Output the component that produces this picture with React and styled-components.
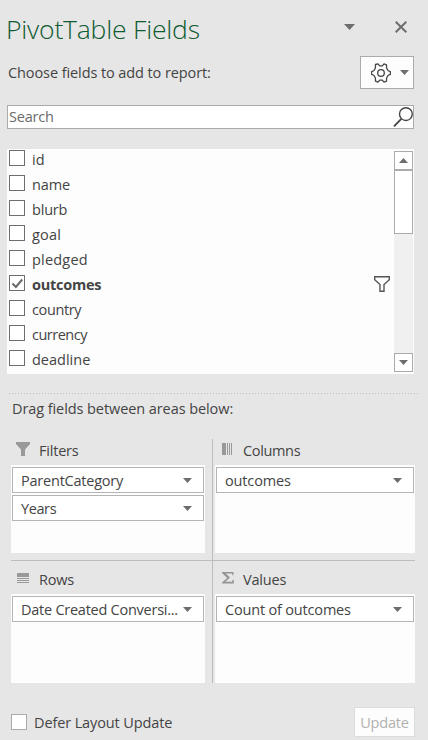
import React from "react";
import styled, { createGlobalStyle } from "styled-components";

const GlobalStyle = createGlobalStyle`
  * { box-sizing: border-box; }
  body { margin: 0; background: #e6e6e6; }
`;

const Pane = styled.main`
  width: 428px;
  height: 740px;
  background: #e6e6e6;
  color: #444;
  font: 14.5px/20px "Open Sans", "Noto Sans", sans-serif;
  overflow: hidden;
  display: flex;
  flex-direction: column;
`;

const Label = styled.span`
  white-space: nowrap;
  letter-spacing: ${(p) => p.$track || 0}px;
  font-weight: ${(p) => (p.$bold ? 700 : 400)};
`;

const TitleBar = styled.header`
  height: 56px;
  padding: 9px 21px 0 6px;
  display: flex;
  align-items: flex-start;
`;

const Title = styled.h1`
  margin: 0;
  flex: 1;
  color: #0f5a30;
  font-size: 26.5px;
  line-height: 40px;
  font-weight: 300;
  letter-spacing: ${(p) => p.$track}px;
  white-space: nowrap;
`;

const TitleIcons = styled.div`
  display: flex;
  align-items: center;
  gap: 40px;
  height: 36px;
`;

const Intro = styled.div`
  height: 33px;
  padding: 0 14px 0 8px;
  display: flex;
  justify-content: space-between;
  align-items: center;
`;

const ToolsButton = styled.button`
  width: 54px;
  height: 33px;
  padding: 0 4px 0 10px;
  border: 1px solid #ababab;
  background: #fdfdfd;
  display: flex;
  align-items: center;
  justify-content: space-between;
`;

const SearchBox = styled.div`
  margin: 16px 14px 20px 7px;
  height: 24px;
  padding-left: 1px;
  border: 1px solid #ababab;
  background: #fff;
  color: #6a6a6a;
  display: flex;
  justify-content: space-between;
  align-items: center;
`;

const FieldPanel = styled.section`
  margin: 0 14px 0 7px;
  height: 225px;
  background: #fdfdfd;
  display: flex;
  padding-right: 1px;
`;

const FieldList = styled.ul`
  flex: 1;
  margin: 0;
  padding: 0;
  list-style: none;
`;

const FieldRow = styled.li`
  height: 25px;
  padding: 1px 4px 0 2px;
  display: flex;
  align-items: flex-start;
`;

const FieldName = styled.div`
  flex: 1;
  padding-left: 7px;
  line-height: 20px;
`;

const FilterSlot = styled.div`
  padding-top: 1px;
  display: flex;
`;

const CheckBox = styled.span`
  width: 16px;
  height: 16px;
  border: 1px solid ${(p) => (p.$light ? "#ababab" : "#6e6e6e")};
  background: #fff;
  display: flex;
  flex: none;
`;

const ScrollBar = styled.div`
  width: 19px;
  margin: 2px 0;
  background: #f0f0f0;
  display: flex;
  flex-direction: column;
`;

const ScrollButton = styled.div`
  height: 19px;
  border: 1px solid #ababab;
  background: #fff;
  display: flex;
  align-items: center;
  justify-content: center;
`;

const Thumb = styled.div`
  height: 64px;
  border: 1px solid #ababab;
  background: #fff;
  margin-bottom: auto;
`;

const Divider = styled.div`
  margin: 19px 10px 0 9px;
  height: 1px;
  flex: none;
  background: repeating-linear-gradient(90deg, #bdbdbd 0 1px, transparent 1px 3px);
`;

const DragHint = styled.p`
  margin: 5px 0 20px 12px;
  height: 20px;
`;

const Areas = styled.section`
  margin: 0 13px 0 11px;
  display: grid;
  grid-template-columns: 201px 1fr;
  grid-template-rows: 121px 123px;
`;

const Area = styled.div`
  padding: ${(p) => (p.$lower ? "0" : "0 0 7px")};
  padding-right: ${(p) => (p.$right ? 0 : 7)}px;
  padding-left: ${(p) => (p.$right ? 2 : 0)}px;
  border-left: ${(p) => (p.$right ? "1px solid #bdbdbd" : "none")};
  border-top: ${(p) => (p.$lower ? "1px solid #bdbdbd" : "none")};
  display: flex;
  flex-direction: column;
`;

const AreaHeader = styled.div`
  height: ${(p) => (p.$lower ? 33 : 26)}px;
  padding: ${(p) => (p.$lower ? 9 : 2)}px 0 0 ${(p) => (p.$right ? 7 : 5)}px;
  display: flex;
  align-items: flex-start;
`;

const IconSlot = styled.span`
  width: ${(p) => (p.$right ? 21 : 23)}px;
  padding-top: ${(p) => p.$drop || 0}px;
  display: flex;
`;

const DropZone = styled.div`
  flex: 1;
  background: #fdfdfd;
  padding: 2px 1px;
  display: flex;
  flex-direction: column;
  gap: 2px;
`;

const Chip = styled.div`
  height: 26px;
  padding: 0 11px 0 8px;
  border: 1px solid #b5b5b5;
  background: #fff;
  display: flex;
  align-items: center;
  justify-content: space-between;
`;

const ChipLabel = styled(Label)`
  padding-top: 2px;
`;

const Footer = styled.footer`
  margin: 24px 13px 0 11px;
  height: 30px;
  display: flex;
  align-items: center;
  gap: 7px;
`;

const FooterLabel = styled(Label)`
  padding-top: 2px;
`;

const UpdateButton = styled.button`
  margin-left: auto;
  width: 61px;
  height: 30px;
  padding: 2px 0 0;
  border: 1px solid #dcdcdc;
  background: #fdfdfd;
  color: #b1b1b1;
  font: inherit;
`;

const Caret = ({ w = 9, h = 5, up, fill = "#6e6e6e" }) => (
  <svg width={w} height={h} viewBox="0 0 10 5" preserveAspectRatio="none">
    <path d={up ? "M0 5h10L5 0z" : "M0 0h10L5 5z"} fill={fill} />
  </svg>
);

const Gear = () => (
  <svg width="20" height="20" viewBox="0 0 20 20" fill="none" stroke="#444" strokeWidth="1.3" strokeLinejoin="round">
    <path d="M4.5 1.5L7 .9 8.7 2.9H11.3L13 .9 15.5 1.8 15.6 5 17 7.5 19.5 8.8V11.2L17 12.5 15.6 15 15.5 18.2 13 19.1 11.3 17.1H8.7L7 19.1 4.5 18.2 4.4 15 3 12.5.5 11.2V8.8L3 7.5 4.4 5z" />
    <circle cx="10" cy="10" r="3.3" />
  </svg>
);

const Magnifier = () => (
  <svg width="21" height="22" viewBox="0 0 21 22" fill="none" stroke="#444" strokeWidth="1.4">
    <circle cx="13.9" cy="8.1" r="6.4" />
    <path d="M9.3 12.8L2 20.3" strokeWidth="1.8" />
  </svg>
);

const FunnelOutline = () => (
  <svg width="16" height="16" viewBox="0 0 16 16" fill="none" stroke="#555" strokeWidth="1.4">
    <path d="M.7.8h14.6v2.9L10 8.5v6.8H6V8.5L.7 3.7z" />
  </svg>
);

const Tick = () => (
  <svg width="14" height="14" viewBox="0 0 14 14" fill="none" stroke="#6a6a6a" strokeWidth="2">
    <path d="M2.5 7.5L5.9 11 12.2 3.5" />
  </svg>
);

const AreaIcons = {
  filter: (
    <svg width="15" height="15" viewBox="0 0 15 15" fill="#999">
      <path d="M0 0h14v2L9 7.5V14H5V7.5L0 2z" />
    </svg>
  ),
  columns: (
    <svg width="12" height="12" viewBox="0 0 12 12" fill="#999" shapeRendering="crispEdges">
      <path d="M0 0h4v12H0zM5 0h1v12H5zM7 0h1v12H7zM9 0h1v12H9z" />
    </svg>
  ),
  rows: (
    <svg width="13" height="10" viewBox="0 0 13 10" fill="#999" shapeRendering="crispEdges">
      <path d="M1 0h12v4H1zM1 5h12v1H1zM1 7h12v1H1zM1 9h12v1H1z" />
    </svg>
  ),
  sigma: (
    <svg width="12" height="12" viewBox="0 0 12 12" fill="#959595">
      <path d="M0 0h11.5v3.2h-1L10 1.5H3.8L8 5.6 3.4 9.8H10l.8-2h1V11.5H0v-1L5.2 6 0 1z" />
    </svg>
  ),
};

const FIELDS = [
  ["id", 0],
  ["name", -0.15],
  ["blurb", -0.2],
  ["goal", 0.2],
  ["pledged", 0.2],
  ["outcomes", -0.25, true],
  ["country", -0.38],
  ["currency", -0.5],
  ["deadline", 0],
];

const AREAS = [
  { name: "Filters", track: -0.2, icon: "filter", drop: 1, chips: [["ParentCategory", -0.22], ["Years", -0.4]] },
  { name: "Columns", track: -0.35, icon: "columns", drop: 2, right: true, chips: [["outcomes", -0.15]] },
  { name: "Rows", track: -0.2, icon: "rows", drop: 3, lower: true, chips: [["Date Created Conversi...", -0.25]] },
  { name: "Values", track: -0.2, icon: "sigma", drop: 2, right: true, lower: true, chips: [["Count of outcomes", -0.18]] },
];

export default function App() {
  return (
    <Pane>
      <GlobalStyle />
      <TitleBar>
        <Title $track={-0.2}>PivotTable Fields</Title>
        <TitleIcons>
          <Caret w={11} h={6} />
          <svg width="12" height="12" viewBox="0 0 12 12" stroke="#6e6e6e" strokeWidth="2">
            <path d="M.7.7l10.6 10.6M11.3.7L.7 11.3" />
          </svg>
        </TitleIcons>
      </TitleBar>
      <Intro>
        <Label $track={-0.09}>Choose fields to add to report:</Label>
        <ToolsButton aria-label="Tools">
          <Gear />
          <Caret />
        </ToolsButton>
      </Intro>
      <SearchBox>
        <Label $track={-0.2}>Search</Label>
        <Magnifier />
      </SearchBox>
      <FieldPanel>
        <FieldList>
          {FIELDS.map(([name, track, checked]) => (
            <FieldRow key={name}>
              <CheckBox>{checked && <Tick />}</CheckBox>
              <FieldName>
                <Label $track={track} $bold={checked}>{name}</Label>
              </FieldName>
              {checked && <FilterSlot><FunnelOutline /></FilterSlot>}
            </FieldRow>
          ))}
        </FieldList>
        <ScrollBar>
          <ScrollButton><Caret up /></ScrollButton>
          <Thumb />
          <ScrollButton><Caret /></ScrollButton>
        </ScrollBar>
      </FieldPanel>
      <Divider />
      <DragHint><Label $track={-0.08}>Drag fields between areas below:</Label></DragHint>
      <Areas>
        {AREAS.map((a) => (
          <Area key={a.name} $right={a.right} $lower={a.lower}>
            <AreaHeader $right={a.right} $lower={a.lower}>
              <IconSlot $right={a.right} $drop={a.drop}>{AreaIcons[a.icon]}</IconSlot>
              <Label $track={a.track}>{a.name}</Label>
            </AreaHeader>
            <DropZone>
              {a.chips.map(([text, track]) => (
                <Chip key={text}>
                  <ChipLabel $track={track}>{text}</ChipLabel>
                  <Caret />
                </Chip>
              ))}
            </DropZone>
          </Area>
        ))}
      </Areas>
      <Footer>
        <CheckBox $light />
        <FooterLabel $track={-0.12}>Defer Layout Update</FooterLabel>
        <UpdateButton><Label $track={-0.2}>Update</Label></UpdateButton>
      </Footer>
    </Pane>
  );
}
